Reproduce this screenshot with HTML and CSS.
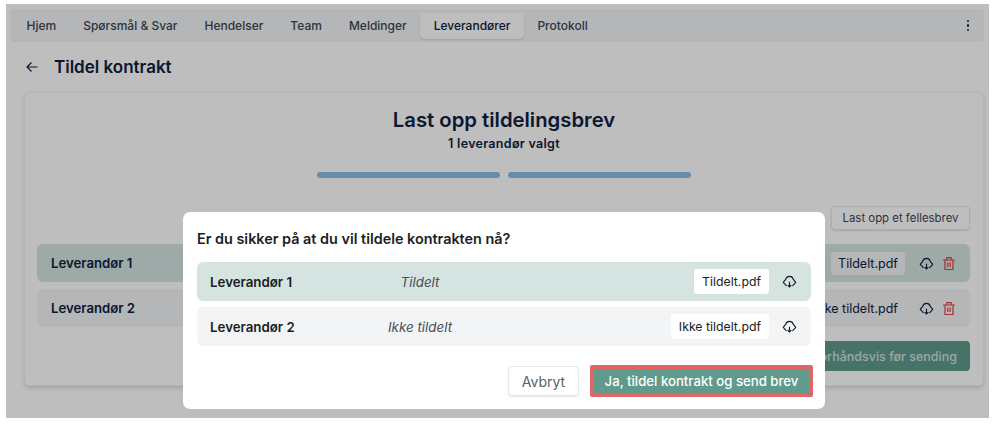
FILE: index.html
```html
<!DOCTYPE html>
<html lang="no">
<head>
    <meta charset="UTF-8">
    <meta name="viewport" content="width=device-width, initial-scale=1.0">
    <title>Tildel kontrakt</title>
    <link rel="stylesheet" href="styles.css">
</head>
<body>
    <svg class="defs" width="0" height="0">
        <symbol id="cloud" viewBox="0 0 24 24">
            <path d="M7.5 18.5H6.8L2 13.500 5.900 8.600a6.300 6.300 0 0 1 12.200 0L22 13.500 17.200 18.500h-.7" fill="none" stroke="currentColor" stroke-width="1.800" stroke-linejoin="round"/>
            <path d="M12 12.500v8M9 17.800l3 3 3-3" fill="none" stroke="currentColor" stroke-width="1.800"/>
        </symbol>
    </svg>
    <div class="screen">
        <nav class="tabs">
            <a href="#">Hjem</a>
            <a href="#">Spørsmål &amp; Svar</a>
            <a href="#">Hendelser</a>
            <a href="#">Team</a>
            <a href="#">Meldinger</a>
            <a href="#" class="active">Leverandører</a>
            <a href="#">Protokoll</a>
            <span class="kebab"><i></i><i></i><i></i></span>
        </nav>
        <div class="title">
            <svg class="back" width="14" height="14" viewBox="0 0 14 14"><path d="M12.500 7H2M6.500 2.500L2 7l4.500 4.500" fill="none" stroke="currentColor" stroke-width="1.200"/></svg>
            <h1>Tildel kontrakt</h1>
        </div>
        <section class="card">
            <h2>Last opp tildelingsbrev</h2>
            <p class="sub">1 leverandør valgt</p>
            <div class="steps"><span></span><span></span></div>
            <div class="upload"><button class="plain">Last opp et fellesbrev</button></div>
            <div class="row chosen">
                <b>Leverandør 1</b>
                <span class="chip">Tildelt.pdf</span>
                <svg class="ico"><use href="#cloud"/></svg>
                <svg class="ico trash" viewBox="0 0 14 14"><path d="M1 3.500h12M3 3.500V13h8V3.500M4.800 3.500V1.200h4.400v2.300M5.800 6v4.500M8.200 6v4.500" fill="none" stroke="currentColor" stroke-width="1.200"/></svg>
            </div>
            <div class="row">
                <b>Leverandør 2</b>
                <span class="chip">Ikke tildelt.pdf</span>
                <svg class="ico"><use href="#cloud"/></svg>
                <svg class="ico trash" viewBox="0 0 14 14"><path d="M1 3.500h12M3 3.500V13h8V3.500M4.800 3.500V1.200h4.400v2.300M5.800 6v4.500M8.200 6v4.500" fill="none" stroke="currentColor" stroke-width="1.200"/></svg>
            </div>
            <div class="send"><button class="preview">Forhåndsvis før sending</button></div>
        </section>
        <div class="overlay"></div>
        <div class="modal">
            <h3>Er du sikker på at du vil tildele kontrakten nå?</h3>
            <div class="mrow chosen">
                <b>Leverandør 1</b>
                <em>Tildelt</em>
                <span class="chip">Tildelt.pdf</span>
                <svg class="ico"><use href="#cloud"/></svg>
            </div>
            <div class="mrow">
                <b>Leverandør 2</b>
                <em>Ikke tildelt</em>
                <span class="chip">Ikke tildelt.pdf</span>
                <svg class="ico"><use href="#cloud"/></svg>
            </div>
            <div class="actions">
                <button class="cancel">Avbryt</button>
                <button class="confirm">Ja, tildel kontrakt og send brev</button>
            </div>
        </div>
    </div>
</body>
</html>
```

FILE: styles.css
```css
* { box-sizing: border-box; }
body { margin: 0; padding: 4px 6px 9px; background: #fff; font-family: "Inter", "Liberation Sans", sans-serif; font-size: 12px; color: #0f2240; }
h1, h2, h3, p { margin: 0; }
a { text-decoration: none; color: inherit; }
button { font-family: inherit; cursor: pointer; }
.defs { position: absolute; }

.screen { position: relative; width: 983px; height: 414px; background: #fff; overflow: hidden; padding-top: 5px; }
.overlay { position: absolute; inset: 0; background: rgba(0, 0, 0, .255); }

/* tabs */
.tabs { display: flex; align-items: center; height: 33px; margin: 0 5px 0 4px; padding: 0 15px 0 3px; background: #f3f4f6; border-radius: 4px; font-size: 12px; font-weight: 500; color: #3c4655; }
.tabs a { padding: 6px 13.500px; line-height: 14px; border-radius: 5px; }
.tabs .active { background: #fff; color: #0f2240; box-shadow: 0 1px 2px rgba(0, 0, 0, .12); }
.kebab { display: flex; flex-direction: column; gap: 2px; margin-left: auto; }
.kebab i { width: 2.500px; height: 2.500px; border-radius: 50%; background: #1f2937; }

.title { display: flex; align-items: center; height: 50px; padding-left: 19px; }
.back { margin-right: 15px; }
h1 { font-size: 17px; font-weight: 600; }

/* card */
.card { height: 294px; margin: 0 5px 0 18px; padding-top: 15px; background: #fff; border: 1px solid #f0f0f0; border-radius: 5px; box-shadow: 0 2px 4px rgba(0, 0, 0, .15); }
h2 { font-size: 20.300px; font-weight: 600; line-height: 24px; text-align: center; }
.sub { margin-top: 4px; font-size: 12.500px; font-weight: 600; letter-spacing: .3px; line-height: 15px; text-align: center; }
.steps { display: flex; justify-content: center; gap: 8px; margin-top: 21px; }
.steps span { width: 183px; height: 6px; border-radius: 3px; background: #8dbce8; }
.upload { display: flex; justify-content: flex-end; margin: 28px 13px 14px 0; }
.plain { height: 24px; width: 139px; padding: 0; background: #fff; border: 1px solid #e5e7eb; border-radius: 4px; box-shadow: 0 1px 2px rgba(0, 0, 0, .12); font-size: 11.400px; color: #3c4655; }
.row { display: flex; align-items: center; height: 38px; margin: 0 13px 7px 12px; padding: 0 14px; background: #f3f4f6; border-radius: 6px; font-size: 13.200px; }
.row b { font-weight: 600; margin-right: auto; }
.row .chip { margin-right: 14px; background: #f3f4f6; height: 23px; font-size: 12.500px; padding: 0 7px; }
.row .ico { color: #0f2240; }
.row .trash { width: 14px; height: 15px; margin-left: 8px; color: #e53e3e; }
.chosen { background: #d5e4e0; }
.send { display: flex; justify-content: flex-end; margin: 14px 13px 0 0; }
.preview { width: 190px; height: 30px; padding: 0 13px 0 0; text-align: right; background: #5f9a8c; border: 0; border-radius: 4px; font-size: 12.500px; font-weight: 500; color: #cfe3dd; }

.chip { display: flex; align-items: center; background: #fff; border-radius: 3px; white-space: nowrap; }
.ico { width: 15px; height: 15px; flex: none; }

/* dialog */
.modal { position: absolute; left: 177px; top: 208px; width: 642px; height: 197px; padding: 0 14px; background: #fff; border-radius: 7px; color: #1a1d24; }
h3 { padding-top: 18px; height: 50px; font-size: 14.400px; font-weight: 600; line-height: 17px; }
.mrow { display: grid; grid-template-columns: 130px 160px 1fr auto 15px; align-items: center; height: 39px; margin-bottom: 6px; padding: 0 14px 0 13px; background: #f3f4f6; border-radius: 6px; font-size: 13.300px; }
.mrow b { font-weight: 600; }
.mrow em { font-size: 13.400px; text-align: center; color: #4b4f57; }
.mrow .chip { grid-column: 4; height: 25px; padding: 0 8px; font-size: 12.300px; margin-right: 13px; }
.mrow.chosen { background: #d5e4e0; }
.actions { display: flex; align-items: center; justify-content: flex-end; gap: 11px; margin: 19px -2px 0 0; }
.cancel { width: 71px; height: 30px; padding: 0; background: #fff; border: 1px solid #e5e7eb; border-radius: 4px; box-shadow: 0 1px 2px rgba(0, 0, 0, .1); font-size: 14px; color: #5a5f68; }
.confirm { width: 223px; height: 32px; padding: 0; background: #5f9a8c; border: 4px solid #e06666; border-radius: 2px; font-size: 13.200px; font-weight: 500; color: #fff; }
```
